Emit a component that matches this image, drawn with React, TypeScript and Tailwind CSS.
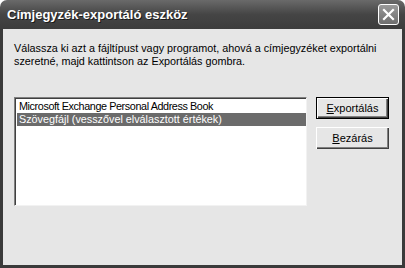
import React from "react";

export default function App() {
  const font = { fontFamily: '"Liberation Sans", Arial, sans-serif' };
  return (
    <div className="w-[405px] h-[268px] bg-white flex flex-col overflow-hidden" style={font}>
      <div className="h-[29px] flex items-center justify-between pl-[7px] pr-[6px] rounded-t-[7px] bg-gradient-to-b from-[#6a6a6a] via-[#454545] to-[#3c3c3c]">
        <span className="text-white font-bold text-[13px]" style={{ textShadow: "1px 1px 0 #1a1a1a" }}>
          Címjegyzék-exportáló eszköz
        </span>
        <div className="w-[21px] h-[21px] rounded-[3px] border border-white bg-gradient-to-b from-[#9a9a9a] to-[#6e6e6e] flex items-center justify-center">
          <svg width="13" height="13" viewBox="0 0 13 13">
            <path d="M2 2 L11 11 M11 2 L2 11" stroke="white" strokeWidth="2.2" strokeLinecap="square" />
          </svg>
        </div>
      </div>
      <div className="flex-1 flex px-[3px] pb-[3px] bg-[#3a3a3a]">
        <div className="flex-1 bg-[#e6e6e6] flex flex-col px-[11px] pt-[13px] text-[10.8px] text-black leading-[13px]">
          <p>Válassza ki azt a fájltípust vagy programot, ahová a címjegyzéket exportálni<br />szeretné, majd kattintson az Exportálás gombra.</p>
          <div className="flex mt-[29px] gap-[9px]">
            <div className="w-[293px] h-[109px] bg-white border border-t-[#808080] border-l-[#808080] border-r-[#f2f2f2] border-b-[#f2f2f2] shadow-[inset_1px_1px_0_#404040] pl-[2px] pt-[2px]">
              <div className="h-[13px] px-[2px] leading-[13px] tracking-[-0.4px]">Microsoft Exchange Personal Address Book</div>
              <div className="h-[13px] px-[2px] leading-[13px] bg-[#6b6b6b] text-white">Szövegfájl (vesszővel elválasztott értékek)</div>
            </div>
            <div className="flex flex-col gap-[8px]">
              <button className="w-[73px] h-[22px] bg-[#e6e6e6] border border-black shadow-[inset_1px_1px_0_#ffffff,inset_-1px_-1px_0_#404040,inset_-2px_-2px_0_#808080] text-[11px]">
                <span className="underline">E</span>xportálás
              </button>
              <button className="w-[73px] h-[22px] bg-[#e6e6e6] shadow-[inset_1px_1px_0_#ffffff,inset_-1px_-1px_0_#404040,inset_-2px_-2px_0_#808080] text-[11px]">
                <span className="underline">B</span>ezárás
              </button>
            </div>
          </div>
        </div>
      </div>
    </div>
  );
}
